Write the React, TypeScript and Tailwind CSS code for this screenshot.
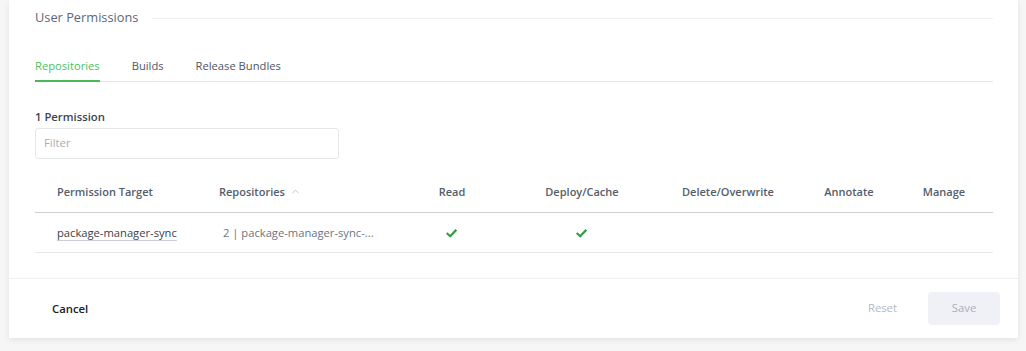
import { ChevronUp } from 'lucide-react'

const cols = 'grid grid-cols-[162px_203px_104px_156px_136px_106px_84px]'

function Check() {
  return (
    <svg width="11" height="9" viewBox="0 0 12 10" className="mx-auto">
      <path d="M1.5 5.2 L4.6 8 L10.5 1.8" fill="none" stroke="#2e9e46" strokeWidth="2.4" strokeLinecap="square" />
    </svg>
  )
}

function App() {
  const headers = ['Read', 'Deploy/Cache', 'Delete/Overwrite', 'Annotate', 'Manage']

  return (
    <div className="w-full h-[351px] bg-[#f6f6f7] px-[9px] overflow-hidden" style={{ fontFamily: '"Open Sans", sans-serif' }}>
      <div className="w-[1009px] bg-white shadow-[0_2px_6px_rgba(0,0,0,0.08)]">
        <div className="pl-[26px] pr-[25px] pt-[8px]">
          <div className="flex items-center gap-[14px] h-[20px]">
            <span className="text-[12.8px] text-[#5d6878]">User Permissions</span>
            <div className="flex-1 h-px bg-[#efefef]" />
          </div>

          <div className="mt-[30px] flex gap-8 border-b border-[#e5e5ea] text-[11.2px]">
            <div className="pb-[5px] text-[#4cc25c] border-b-2 border-[#4cb55a] -mb-px">Repositories</div>
            <div className="pb-[5px] text-[#4f5663]">Builds</div>
            <div className="pb-[5px] text-[#4f5663]">Release Bundles</div>
          </div>

          <div className="mt-[27px] text-[11.3px] font-semibold text-[#3d4451]">1 Permission</div>
          <div className="mt-[2px] w-[304px] h-[31px] border border-[#e6e7eb] rounded-[3px] flex items-center px-[8px]">
            <span className="text-[11.3px] text-[#a9adb5]">Filter</span>
          </div>

          <div className={`${cols} mt-[21px] h-[33px] items-start pt-[4px] border-b border-[#cfcfd2] text-[11px] font-semibold text-[#555d6a]`}>
            <div className="pl-[22px]">Permission Target</div>
            <div className="pl-[22px] flex items-center gap-[5px]">
              Repositories
              <ChevronUp size={11} strokeWidth={2} className="text-[#b8bcc4]" />
            </div>
            {headers.map((h) => (
              <div key={h} className="text-center">{h}</div>
            ))}
          </div>

          <div className={`${cols} h-[40px] items-center border-b border-[#e6e6e8] text-[11.2px]`}>
            <div className="pl-[22px] pt-[2px]">
              <span className="text-[#3a3f4c] underline decoration-[#c9ccd2] underline-offset-[3px]">package-manager-sync</span>
            </div>
            <div className="pl-[26px] pt-[2px] text-[#6e7480]">2 | package-manager-sync-...</div>
            <div className="pt-[2px] pr-[2px]"><Check /></div>
            <div className="pt-[2px] pr-[2px]"><Check /></div>
            <div />
            <div />
            <div />
          </div>
        </div>

        <div className="mt-[25px] border-t border-[#eeeef4] h-[60px] flex items-center pl-[43px] pr-[18px]">
          <span className="pt-[2px] text-[11.3px] font-semibold text-[#222]">Cancel</span>
          <span className="ml-auto text-[11.3px] text-[#b3b8c2]">Reset</span>
          <div className="ml-[31px] w-[72px] h-[33px] rounded-[4px] bg-[#f0f1f6] flex items-center justify-center text-[11.3px] text-[#a9afbc]">
            Save
          </div>
        </div>
      </div>
    </div>
  )
}

export default App
